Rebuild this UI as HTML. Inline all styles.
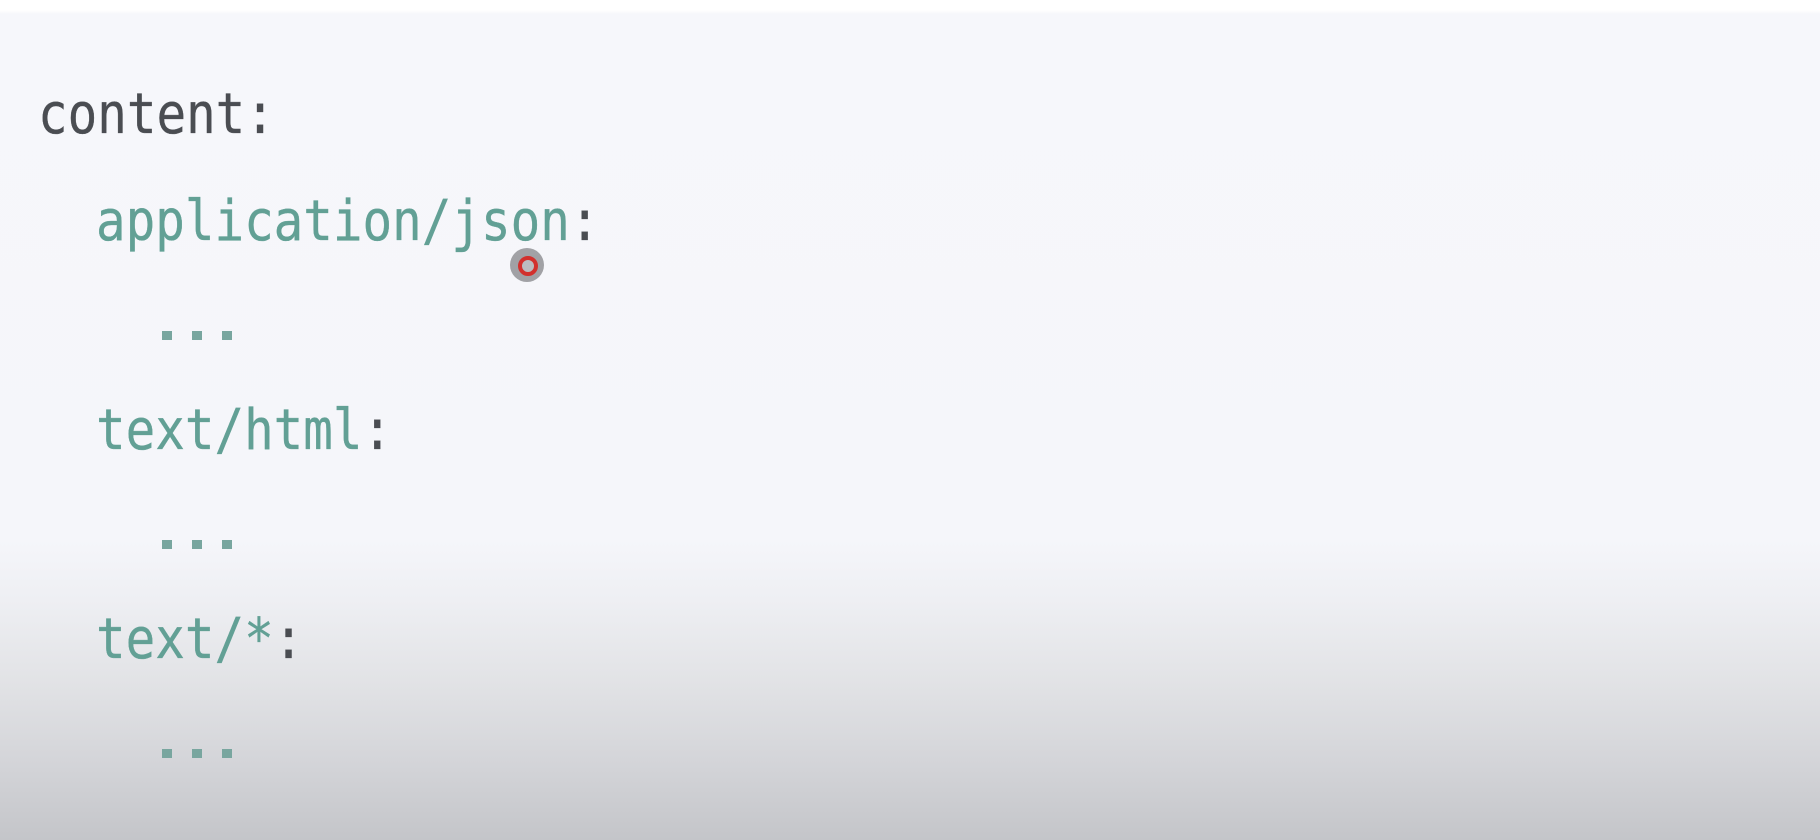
<!DOCTYPE html>
<html><head><meta charset="utf-8"><style>
html,body{margin:0;padding:0}
body{width:1820px;height:840px;overflow:hidden;position:relative;
background:linear-gradient(to bottom,#ffffff 0px,#ffffff 10px,#f6f7fb 14px,#f5f6fa 540px,#eeeff3 600px,#e2e3e6 680px,#d4d5d9 760px,#c4c5c9 840px);
font-family:"DejaVu Sans Mono","Liberation Mono",monospace;font-size:49.2px;}
.l{position:absolute;white-space:pre;line-height:1;color:#62a095;transform:scaleY(1.15);transform-origin:0 80%;-webkit-text-stroke:0.3px currentColor}
.k{color:#4a4d52}
.d{position:absolute;width:10px;height:9px;background:#78a69f}
.cur{position:absolute;left:510px;top:248px;width:34px;height:34px;border-radius:50%;background:#9a9a9e;opacity:.92}
.cur:after{content:"";position:absolute;left:8px;top:8px;width:12px;height:12px;border:4px solid #d0201c;border-radius:50%;background:#b8b8bb}
</style></head><body>
<div class="l k" style="left:38px;top:92px">content:</div>
<div class="l" style="left:96px;top:199px">application/json<span class="k">:</span></div>
<div class="d" style="left:162px;top:331px"></div><div class="d" style="left:192px;top:331px"></div><div class="d" style="left:222px;top:331px"></div>
<div class="l" style="left:96px;top:408px">text/html<span class="k">:</span></div>
<div class="d" style="left:162px;top:540px"></div><div class="d" style="left:192px;top:540px"></div><div class="d" style="left:222px;top:540px"></div>
<div class="l" style="left:96px;top:617px">text/*<span class="k">:</span></div>
<div class="d" style="left:162px;top:749px"></div><div class="d" style="left:192px;top:749px"></div><div class="d" style="left:222px;top:749px"></div>
<div class="cur"></div>
</body></html>
